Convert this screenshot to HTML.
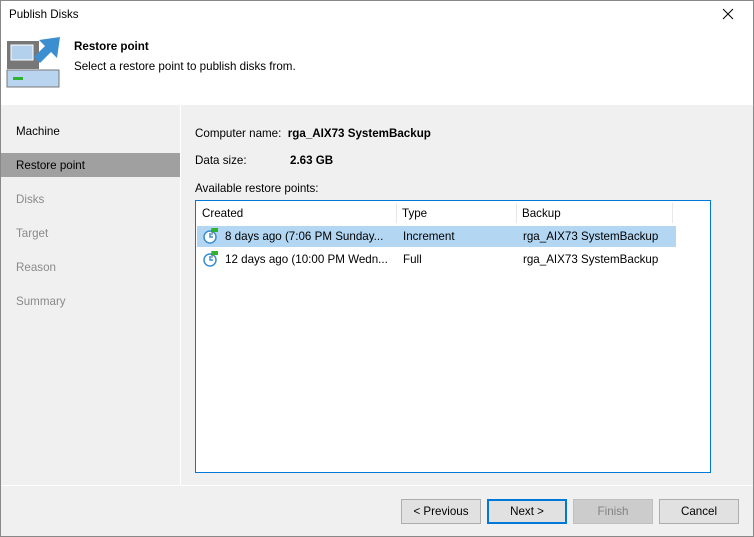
<!DOCTYPE html>
<html><head><style>
*{margin:0;padding:0;box-sizing:border-box}
body{width:754px;height:537px;overflow:hidden;font-family:"Liberation Sans",Arial,sans-serif;font-size:11.6px;color:#000;background:#f0f0f0;position:relative}
.a{position:absolute;white-space:nowrap}
.win{position:absolute;left:0;top:0;width:754px;height:537px;border:1px solid #888;}
.btn{position:absolute;top:499px;width:80px;height:25px;border:1px solid #adadad;background:#e1e1e1;text-align:center;line-height:23px;font-size:11.6px}
</style></head><body>
<div class="a" style="left:0;top:0;width:754px;height:105px;background:#fff"></div>
<div class="a" style="left:9px;top:8px">Publish Disks</div>
<svg class="a" style="left:722px;top:8px" width="12" height="12"><path d="M1 1L11 11M11 1L1 11" stroke="#000" stroke-width="1"/></svg>
<svg class="a" style="left:6px;top:34px" width="56" height="56">
<rect x="1" y="7" width="32" height="28" fill="#777"/>
<rect x="5" y="11" width="22" height="15" fill="#b3d0ec" stroke="#fff" stroke-width="1"/>
<rect x="1" y="36" width="52" height="17" fill="#b8d4ef" stroke="#777" stroke-width="1"/>
<rect x="7" y="43" width="10" height="3" fill="#2db32d"/>
<path d="M33 6L54 3L51 24L45 18L34 29L28 23L39 12Z" fill="#3b8ed0"/>
</svg>
<div class="a" style="left:74px;top:40px;font-weight:bold">Restore point</div>
<div class="a" style="left:74px;top:60px">Select a restore point to publish disks from.</div>
<div class="a" style="left:180px;top:105px;width:1px;height:380px;background:#fff"></div>
<div class="a" style="left:16px;top:125px">Machine</div>
<div class="a" style="left:0;top:153px;width:180px;height:24px;background:#a0a0a0"></div>
<div class="a" style="left:16px;top:159px">Restore point</div>
<div class="a" style="left:16px;top:193px;color:#8a8a8a">Disks</div>
<div class="a" style="left:16px;top:227px;color:#8a8a8a">Target</div>
<div class="a" style="left:16px;top:261px;color:#8a8a8a">Reason</div>
<div class="a" style="left:16px;top:295px;color:#8a8a8a">Summary</div>
<div class="a" style="left:195px;top:127px">Computer name:&nbsp; <b>rga_AIX73 SystemBackup</b></div>
<div class="a" style="left:195px;top:154px">Data size:</div>
<div class="a" style="left:290px;top:154px;font-weight:bold">2.63 GB</div>
<div class="a" style="left:195px;top:182px">Available restore points:</div>
<div class="a" style="left:195px;top:200px;width:516px;height:273px;background:#fff;border:1px solid #0078d7"></div>
<div class="a" style="left:396px;top:203px;width:1px;height:20px;background:#e8e8e8"></div>
<div class="a" style="left:516px;top:203px;width:1px;height:20px;background:#e8e8e8"></div>
<div class="a" style="left:672px;top:203px;width:1px;height:20px;background:#e8e8e8"></div>
<div class="a" style="left:202px;top:207px">Created</div>
<div class="a" style="left:402px;top:207px">Type</div>
<div class="a" style="left:522px;top:207px">Backup</div>
<div class="a" style="left:197px;top:226px;width:479px;height:21px;background:#b3d7f3"></div>
<svg class="a" style="left:202px;top:227px" width="18" height="18"><circle cx="8" cy="10" r="6" fill="#fff" stroke="#3b8ed0" stroke-width="1.5"/><path d="M8 6V10H11" stroke="#3b8ed0" stroke-width="1.5" fill="none"/><path d="M10 1V8" stroke="#555"/><path d="M10 1H16V5H10Z" fill="#2db32d"/></svg>
<div class="a" style="left:225px;top:230px">8 days ago (7:06 PM Sunday...</div>
<div class="a" style="left:403px;top:230px">Increment</div>
<div class="a" style="left:523px;top:230px">rga_AIX73 SystemBackup</div>
<svg class="a" style="left:202px;top:250px" width="18" height="18"><circle cx="8" cy="10" r="6" fill="#fff" stroke="#3b8ed0" stroke-width="1.5"/><path d="M8 6V10H11" stroke="#3b8ed0" stroke-width="1.5" fill="none"/><path d="M10 1V8" stroke="#555"/><path d="M10 1H16V5H10Z" fill="#2db32d"/></svg>
<div class="a" style="left:225px;top:253px">12 days ago (10:00 PM Wedn...</div>
<div class="a" style="left:403px;top:253px">Full</div>
<div class="a" style="left:523px;top:253px">rga_AIX73 SystemBackup</div>
<div class="a" style="left:0;top:485px;width:754px;height:1px;background:#fff"></div>
<div class="btn" style="left:401px">&lt; Previous</div>
<div class="btn" style="left:487px;border:2px solid #0078d7;line-height:21px">Next &gt;</div>
<div class="btn" style="left:573px;background:#cccccc;border-color:#bfbfbf;color:#838383">Finish</div>
<div class="btn" style="left:659px">Cancel</div>
<div class="win"></div>
</body></html>
